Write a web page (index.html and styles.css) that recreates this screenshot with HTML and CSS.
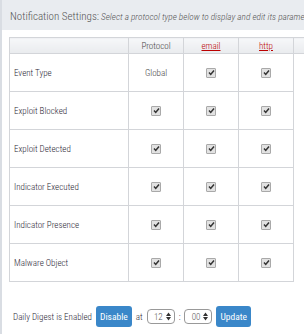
FILE: index.html
```
<!DOCTYPE html>
<html lang="en">
<head>
  <meta charset="UTF-8">
  <title>Notification Settings</title>
  <link rel="stylesheet" href="styles.css">
</head>
<body>

  <div class="panel">
    <div class="title-bar">
      <span class="title">Notification Settings:</span>
      <span class="hint">Select a protocol type below to display and edit its parameters.</span>
    </div>

    <div class="content">
      <table class="settings">
        <thead>
          <tr>
            <th class="col-name"></th>
            <th class="col-proto">Protocol</th>
            <th class="col-proto"><a href="#">email</a></th>
            <th class="col-proto"><a href="#">http</a></th>
            <th class="col-extra"></th>
          </tr>
        </thead>
        <tbody id="rows">
          <tr>
            <td class="name">Event Type</td>
            <td class="center">Global</td>
            <td class="center"><span class="check"><svg width="7" height="7" viewBox="0 0 7 7"><path d="M1 3.6 L2.7 5.4 L6 1.4" fill="none" stroke="#333" stroke-width="1.5"/></svg></span></td>
            <td class="center"><span class="check"><svg width="7" height="7" viewBox="0 0 7 7"><path d="M1 3.6 L2.7 5.4 L6 1.4" fill="none" stroke="#333" stroke-width="1.5"/></svg></span></td>
            <td class="extra"></td>
          </tr>
        </tbody>
      </table>

      <div class="digest">
        <span class="digest-label">Daily Digest is Enabled</span>
        <button class="btn">Disable</button>
        <span>at</span>
        <span class="spin">12 <svg width="5" height="9" viewBox="0 0 5 9"><path d="M0 4 L2.5 0.5 L5 4 Z M0 5 L2.5 8.5 L5 5 Z" fill="#333"/></svg></span>
        <span>:</span>
        <span class="spin">00 <svg width="5" height="9" viewBox="0 0 5 9"><path d="M0 4 L2.5 0.5 L5 4 Z M0 5 L2.5 8.5 L5 5 Z" fill="#333"/></svg></span>
        <button class="btn">Update</button>
      </div>
    </div>
  </div>

  <script>
    // event rows, all three boxes ticked
    var events = ['Exploit Blocked', 'Exploit Detected', 'Indicator Executed', 'Indicator Presence', 'Malware Object'];
    var tick = '<td class="center"><span class="check"><svg width="7" height="7" viewBox="0 0 7 7"><path d="M1 3.6 L2.7 5.4 L6 1.4" fill="none" stroke="#333" stroke-width="1.5"/></svg></span></td>';
    var tbody = document.getElementById('rows');
    events.forEach(function (name) {
      var tr = document.createElement('tr');
      tr.innerHTML = '<td class="name">' + name + '</td>' + tick + tick + tick + '<td class="extra"></td>';
      tbody.appendChild(tr);
    });
  </script>

</body>
</html>
```
FILE: styles.css
```
html, body {
  margin: 0;
  overflow: hidden;
}

body {
  font-family: "Roboto Condensed", Roboto, sans-serif;
  font-size: 9px;
  font-weight: 300;
  color: #2c2836;
  background: #fff;
}

.panel {
  border-left: 2px solid #d9dde3;
  min-height: 334px;
}

.title-bar {
  height: 30px;
  background-color: #e9ecf0;
  padding-left: 8px;
  white-space: nowrap;
  overflow: hidden;
  line-height: 34px;
}

.title {
  font-size: 11px;
  color: #555;
}

.hint {
  font-size: 9.3px;
  font-style: italic;
  color: #555;
}

.content {
  padding: 7px 0 0 7px;
}

.settings {
  border-collapse: collapse;
  table-layout: fixed;
  width: 340px;
}

.settings th {
  height: 15px;
  padding: 0;
  font-weight: 300;
  color: #444;
  background: linear-gradient(#f6f7f9, #e9ebee);
  border: 1px solid #d3d5d9;
}

.settings th a {
  color: #b00;
}

.col-name { width: 118px; }
.col-proto { width: 54px; }
.col-extra { border-right: none !important; }

.settings td {
  height: 37px;
  padding: 0;
  border: 1px solid #d3d5d9;
}

.settings td.name {
  padding-left: 4px;
}

.settings td.center {
  text-align: center;
  color: #444;
}

.settings td.extra {
  border: none;
  border-left: 1px solid #d3d5d9;
}

.check {
  display: inline-block;
  width: 8px;
  height: 8px;
  border: 1px solid #a9a9a9;
  border-radius: 1px;
  background: #e2e2e2;
  vertical-align: middle;
  line-height: 0;
}

.check svg {
  margin: 0.5px 0 0 0.5px;
}

.digest {
  display: flex;
  align-items: center;
  gap: 4px;
  margin-top: 24px;
  padding-left: 4px;
}

.btn {
  height: 21px;
  padding: 0 4px;
  background-color: #3a87c9;
  color: #fff;
  border: none;
  border-radius: 3px;
  font-family: inherit;
  font-size: 9.5px;
}

.spin {
  display: inline-flex;
  align-items: center;
  justify-content: flex-end;
  gap: 3px;
  width: 20px;
  height: 13px;
  padding: 0 3px;
  border: 1px solid #999;
  border-radius: 4px;
  color: #555;
}
```
